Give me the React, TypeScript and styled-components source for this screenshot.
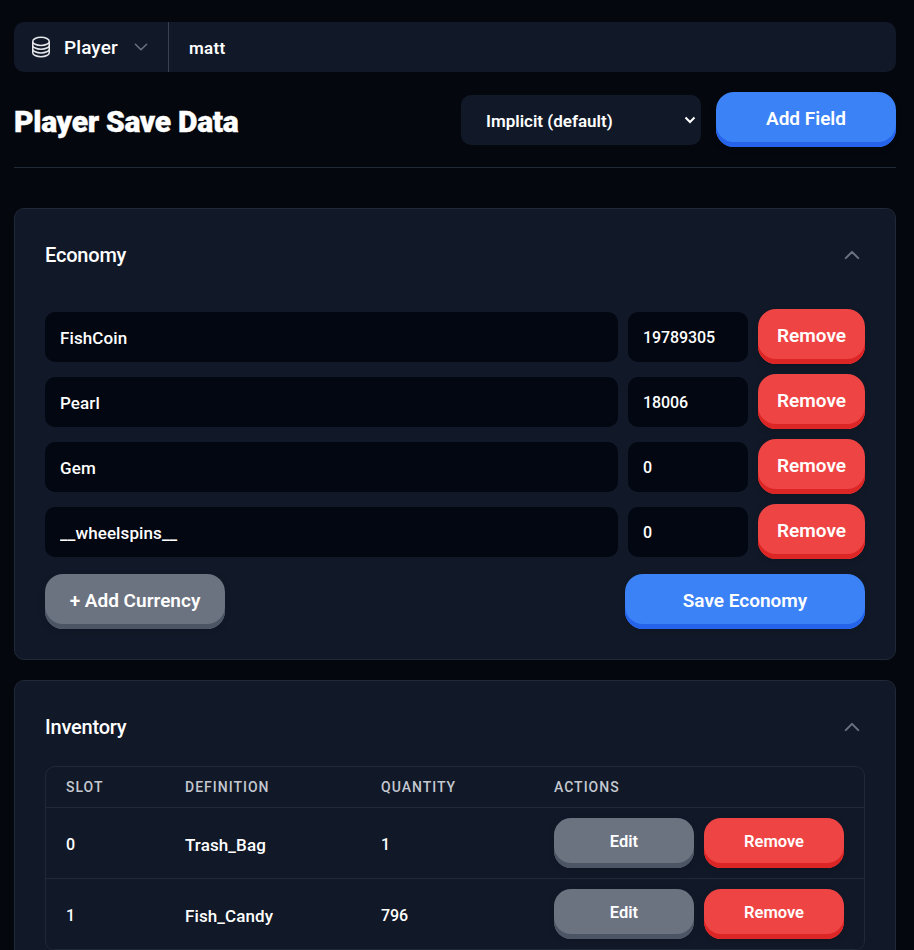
import * as React from "react";
import styled, { createGlobalStyle } from "styled-components";
import { HiOutlineChevronDown, HiOutlineChevronUp, HiOutlineCircleStack } from "react-icons/hi2";

const GlobalStyle = createGlobalStyle`
  html, body {
    margin: 0;
    height: 950px;
    overflow: hidden;
    background: #04070d;
  }
  * {
    box-sizing: border-box;
  }
  body, input, select, button {
    font-family: Roboto, "Liberation Sans", sans-serif;
    color: #fff;
  }
`;

const Page = styled.div`
  padding: 22px 18px 0 14px;
`;

const SearchBar = styled.div`
  display: flex;
  align-items: center;
  height: 50px;
  background: #111827;
  border-radius: 10px;
`;

const PlayerPicker = styled.div`
  display: flex;
  align-items: center;
  width: 155px;
  height: 100%;
  padding-left: 15px;
  border-right: 1px solid #374151;
  font-size: 19px;
  font-weight: 500;
  letter-spacing: 0.1px;
`;

const PickerIcon = styled(HiOutlineCircleStack)`
  flex: none;
  color: #e5e7eb;
`;

const PickerChevron = styled(HiOutlineChevronDown)`
  flex: none;
  color: #6b7280;
  stroke-width: 2;
`;

const PickerLabel = styled.span`
  margin: 0 14px 0 11px;
`;

const SearchInput = styled.input`
  flex: 1;
  height: 100%;
  padding: 1px 20px 0;
  background: transparent;
  border: none;
  outline: none;
  font-size: 17px;
  font-weight: 600;
  letter-spacing: 0.3px;
`;

const TitleRow = styled.div`
  display: flex;
  align-items: center;
  margin-top: 20px;
  height: 55px;
`;

const Title = styled.h1`
  flex: 1;
  margin: 0 0 -3px;
  font-size: 30px;
  font-weight: 900;
  letter-spacing: -0.3px;
  -webkit-text-stroke: 0.4px #fff;
`;

const ModeSelect = styled.select`
  appearance: none;
  width: 240px;
  height: 50px;
  margin: 0 15px 0 0;
  padding: 3px 24px 0 25px;
  background: #111827 no-repeat right 5px center / 12px 8px;
  background-image: url("data:image/svg+xml,%3Csvg xmlns='http://www.w3.org/2000/svg' viewBox='0 0 12 8'%3E%3Cpath d='M1.5 1.5 6 6l4.5-4.5' fill='none' stroke='%23fff' stroke-width='2'/%3E%3C/svg%3E");
  border: none;
  border-radius: 10px;
  outline: none;
  font-size: 17px;
  font-weight: 600;
`;

const tones = {
  blue: { face: "#3b82f6", lip: "#2563eb" },
  red: { face: "#ef4444", lip: "#dc2626" },
  gray: { face: "#6b7280", lip: "#4b5563" },
};

const Button = styled.button<{ $tone: keyof typeof tones; $width: number; $small?: boolean }>`
  flex: none;
  width: ${(p) => p.$width}px;
  height: ${(p) => (p.$small ? 50 : 55)}px;
  padding: 0 0 2px;
  border: none;
  border-radius: ${(p) => (p.$small ? 17 : 18)}px;
  background: ${(p) => tones[p.$tone].face};
  box-shadow: inset 0 -5px 0 ${(p) => tones[p.$tone].lip}, 0 2px 6px rgba(0, 0, 0, 0.12);
  font-size: ${(p) => (p.$small ? 16.5 : 19)}px;
  font-weight: 600;
`;

const Divider = styled.hr`
  margin: 20px 0 40px;
  border: none;
  border-top: 1px solid #1f2937;
`;

const Panel = styled.section`
  margin-bottom: 20px;
  padding: 30px;
  background: #111827;
  border: 1px solid #1f2937;
  border-radius: 10px;
`;

const PanelHeader = styled.header`
  display: flex;
  align-items: center;
  justify-content: space-between;
  height: 32px;
  margin-bottom: 38px;
`;

const PanelTitle = styled.h2`
  margin: 0;
  font-size: 20px;
  font-weight: 500;
  letter-spacing: -0.2px;
`;

const CollapseIcon = styled(HiOutlineChevronUp)`
  color: #6b7280;
  margin-right: 3px;
  stroke-width: 2.4;
`;

const CurrencyRow = styled.div`
  display: flex;
  align-items: center;
  gap: 10px;
  height: 55px;
  margin-bottom: 10px;
`;

const Field = styled.input`
  flex: 1;
  min-width: 0;
  height: 50px;
  padding: 2px 15px 0;
  background: #030712;
  border: none;
  border-radius: 10px;
  outline: none;
  font-size: 17px;
  font-weight: 500;
  letter-spacing: 0.1px;
`;

const AmountField = styled(Field)`
  flex: none;
  width: 120px;
  font-size: 16px;
  letter-spacing: -0.1px;
`;

const PanelFooter = styled.div`
  display: flex;
  justify-content: space-between;
  margin-top: 15px;
`;

const TableWrap = styled.div`
  margin-top: -15px;
  border: 1px solid #1f2937;
  border-radius: 10px;
  overflow: hidden;
`;

const Table = styled.table`
  width: 100%;
  border-collapse: collapse;
  table-layout: fixed;
`;

const HeadCell = styled.th<{ $width?: number }>`
  ${(p) => (p.$width ? `width: ${p.$width}px;` : "")}
  height: 40px;
  padding: 1px 0 0 20px;
  border-bottom: 1px solid #1f2937;
  text-align: left;
  font-size: 14px;
  font-weight: 500;
  letter-spacing: 1px;
  color: #c4c8d0;
`;

const Cell = styled.td`
  height: 71px;
  padding: 4px 0 0 20px;
  border-bottom: 1px solid #1f2937;
  font-size: 16px;
  font-weight: 500;
  letter-spacing: -0.1px;
`;

const NameCell = styled(Cell)`
  font-size: 17px;
  letter-spacing: 0.1px;
`;

const ActionCell = styled(Cell)`
  padding-top: 0;
`;

const Actions = styled.div`
  display: flex;
  gap: 10px;
`;

const currencies = [
  { name: "FishCoin", amount: "19789305" },
  { name: "Pearl", amount: "18006" },
  { name: "Gem", amount: "0" },
  { name: "__wheelspins__", amount: "0" },
];

const items = [
  { slot: 0, definition: "Trash_Bag", quantity: 1 },
  { slot: 1, definition: "Fish_Candy", quantity: 796 },
];

export default function App() {
  return (
    <Page>
      <GlobalStyle />
      <SearchBar>
        <PlayerPicker>
          <PickerIcon size={24} />
          <PickerLabel>Player</PickerLabel>
          <PickerChevron size={18} />
        </PlayerPicker>
        <SearchInput defaultValue="matt" />
      </SearchBar>

      <TitleRow>
        <Title>Player Save Data</Title>
        <ModeSelect defaultValue="implicit">
          <option value="implicit">Implicit (default)</option>
        </ModeSelect>
        <Button $tone="blue" $width={180}>Add Field</Button>
      </TitleRow>

      <Divider />

      <Panel>
        <PanelHeader>
          <PanelTitle>Economy</PanelTitle>
          <CollapseIcon size={20} />
        </PanelHeader>
        {currencies.map((c) => (
          <CurrencyRow key={c.name}>
            <Field defaultValue={c.name} />
            <AmountField defaultValue={c.amount} />
            <Button $tone="red" $width={107}>Remove</Button>
          </CurrencyRow>
        ))}
        <PanelFooter>
          <Button $tone="gray" $width={180}>+ Add Currency</Button>
          <Button $tone="blue" $width={240}>Save Economy</Button>
        </PanelFooter>
      </Panel>

      <Panel>
        <PanelHeader>
          <PanelTitle>Inventory</PanelTitle>
          <CollapseIcon size={20} />
        </PanelHeader>
        <TableWrap>
          <Table>
            <thead>
              <tr>
                <HeadCell $width={119}>SLOT</HeadCell>
                <HeadCell $width={196}>DEFINITION</HeadCell>
                <HeadCell $width={173}>QUANTITY</HeadCell>
                <HeadCell>ACTIONS</HeadCell>
              </tr>
            </thead>
            <tbody>
              {items.map((item) => (
                <tr key={item.slot}>
                  <Cell>{item.slot}</Cell>
                  <NameCell>{item.definition}</NameCell>
                  <Cell>{item.quantity}</Cell>
                  <ActionCell>
                    <Actions>
                      <Button $tone="gray" $width={140} $small>Edit</Button>
                      <Button $tone="red" $width={140} $small>Remove</Button>
                    </Actions>
                  </ActionCell>
                </tr>
              ))}
            </tbody>
          </Table>
        </TableWrap>
      </Panel>
    </Page>
  );
}
